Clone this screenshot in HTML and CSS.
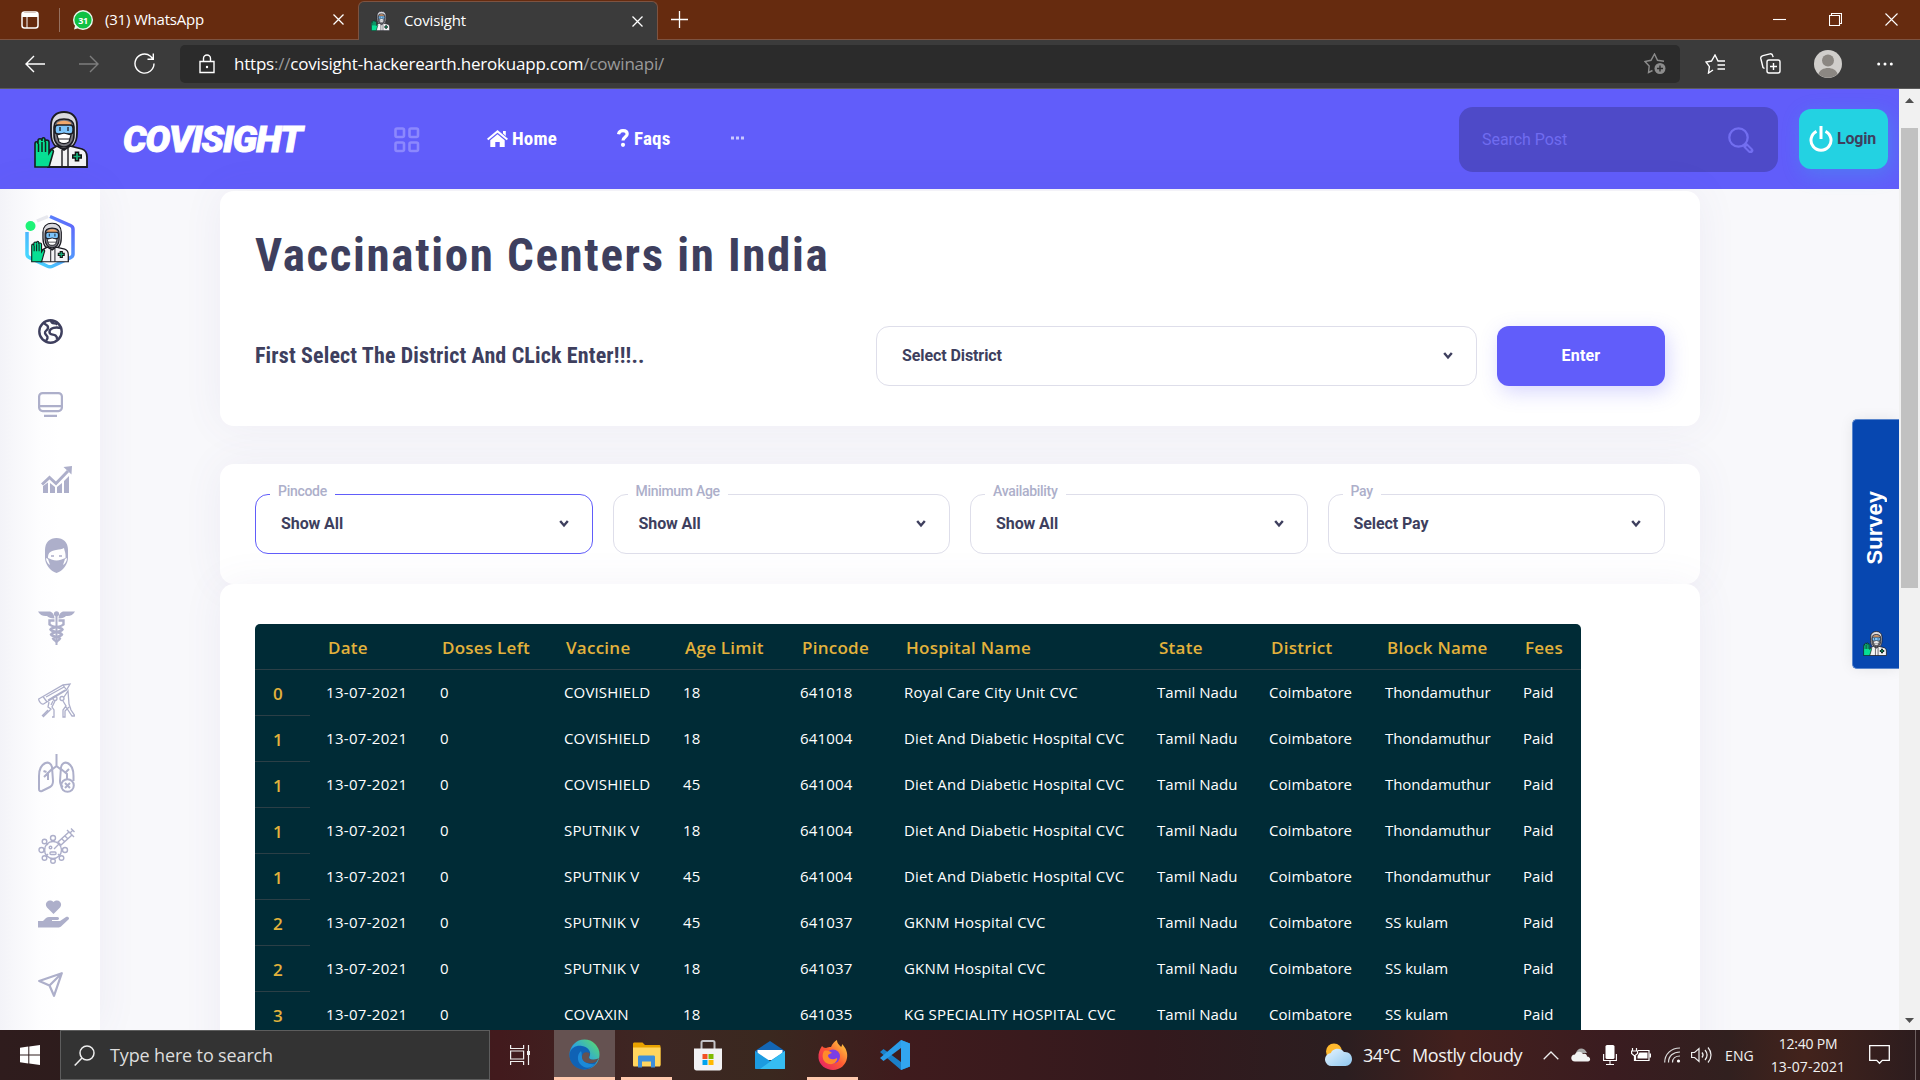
FILE: index.html
```html
<!DOCTYPE html>
<html lang="en">
<head>
<meta charset="utf-8">
<title>Covisight</title>
<link rel="stylesheet" href="styles.css">
</head>
<body>
<svg class="defs" aria-hidden="true">
  <defs>
    <symbol id="doctor" viewBox="0 0 54 57">
      <path d="M30 1c-8 0-13 5-13 13v8c0 9 4 16 13 16s13-7 13-16v-8C43 6 38 1 30 1z" fill="#d9d9de" stroke="#1b1b22" stroke-width="1.8"/>
      <path d="M20 16c0-6 4-8 10-8s10 2 10 8v8c0 7-4 12-10 12s-10-5-10-12z" fill="#77777f" stroke="#1b1b22" stroke-width="1.6"/>
      <path d="M23 12c4-3 10-3 14 0v3H23z" fill="#f0a86c"/>
      <rect x="21" y="14" width="18" height="9" rx="3" fill="#7cc4fb" stroke="#1b1b22" stroke-width="1.5"/>
      <path d="M26 16v4M34 16v4" stroke="#1b1b22" stroke-width="1.3"/>
      <path d="M23 24l7-2 7 2-2 7c-3 2-7 2-10 0z" fill="#fff" stroke="#1b1b22" stroke-width="1.2"/>
      <path d="M24 28h12" stroke="#1b1b22"/>
      <path d="M14 56V40l9-5 7 4 6-4 12 3c3 1 5 4 5 8v10z" fill="#f3f3f5" stroke="#1b1b22" stroke-width="1.8"/>
      <path d="M28 39v17M34 37v19" stroke="#1b1b22" stroke-width="1.4"/>
      <path d="M43 40.500v10M38 45.500h10" stroke="#111" stroke-width="4.600"/>
      <path d="M43 42v7M39.500 45.500h7" stroke="#17b07a" stroke-width="1.700"/>
      <path d="M1 56V33c0-3 3-3 3 0v-3c0-3 4-3 4 0v-1c0-3 3-3 3 0v2c0-3 4-2 4 0v11l2-3c2-1 3 1 2 3l-4 14z" fill="#07df94" stroke="#14201d" stroke-width="1.6"/>
      <path d="M4.500 33v8M8 31v10M11.500 31v10" stroke="#14201d" stroke-width="1.5"/>
    </symbol>
    <linearGradient id="hexline" x1="1" y1="0" x2="0" y2="1"><stop offset="0" stop-color="#615dfa"/><stop offset="1" stop-color="#41e5ff"/></linearGradient>
    <linearGradient id="edgeA" x1="0" y1="1" x2="1" y2="0"><stop offset="0" stop-color="#0c59a4"/><stop offset=".45" stop-color="#2aa3e0"/><stop offset="1" stop-color="#61e261"/></linearGradient>
    <linearGradient id="fox" x1="0" y1="1" x2="1" y2="0"><stop offset="0" stop-color="#e0186f"/><stop offset=".5" stop-color="#ff5a33"/><stop offset="1" stop-color="#ffe240"/></linearGradient>
    <linearGradient id="cloud" x1="0" y1="0" x2="1" y2="1"><stop offset="0" stop-color="#e6f4ff"/><stop offset="1" stop-color="#8ec7ef"/></linearGradient>
  </defs>
</svg>

<div class="tabstrip">
  <svg class="tab-actions" width="18" height="18" viewBox="0 0 18 18"><rect x="1" y="1" width="16" height="16" rx="2.500" fill="none" stroke="#fff" stroke-width="1.500"/><path d="M1 2h16v4H1z" fill="#fff"/><path d="M6 6v11" stroke="#fff"/></svg>
  <div class="tab tab-idle">
    <svg width="20" height="20" viewBox="0 0 20 20"><circle cx="10" cy="10" r="9.300" fill="#0fc143" stroke="#e9f6ec" stroke-width="1.400"/><path d="M1 19.500l1.400-5 3.500 3.400z" fill="#e9f6ec"/><text x="10" y="13.600" text-anchor="middle" class="badge">31</text></svg>
    <span>(31) WhatsApp</span>
    <svg class="x" width="11" height="11" viewBox="0 0 11 11"><path d="M.5.500l10 10M10.500.500l-10 10"/></svg>
  </div>
  <div class="tab tab-active">
    <svg width="19" height="20"><use href="#doctor"/></svg>
    <span>Covisight</span>
    <svg class="x" width="11" height="11" viewBox="0 0 11 11"><path d="M.5.500l10 10M10.500.500l-10 10"/></svg>
  </div>
  <svg class="plus" width="17" height="17" viewBox="0 0 17 17"><path d="M8.500 0v17M0 8.500h17" stroke="#fff" stroke-width="1.300"/></svg>
  <div class="win">
    <svg width="13" height="13" viewBox="0 0 13 13"><path d="M0 6.500h13"/></svg>
    <svg width="13" height="13" viewBox="0 0 13 13"><path d="M.5 2.500h10v10H.5zM2.500 2.500v-2h10v10h-2"/></svg>
    <svg width="13" height="13" viewBox="0 0 13 13"><path d="M.5.500l12 12M12.500.500l-12 12"/></svg>
  </div>
</div>

<div class="toolbar">
  <svg width="20" height="18" viewBox="0 0 20 18"><path d="M20 9H1M9 1L1 9l8 8"/></svg>
  <svg class="dim" width="20" height="18" viewBox="0 0 20 18"><path d="M0 9h19M11 1l8 8-8 8"/></svg>
  <svg width="21" height="21" viewBox="0 0 21 21"><path d="M20 10.500a9.500 9.500 0 1 1-3.500-7.300L19 6M19.300.500V6.200H13.500"/></svg>
  <div class="url">
    <svg width="16" height="20" viewBox="0 0 16 20"><path d="M1 7.500h14v11H1zM4.500 7.500V4.500a3.500 3.500 0 0 1 7 0v3" /><circle cx="8" cy="13" r="1.200" fill="#fff" stroke="none"/></svg>
    <p>https<i>://</i>covisight-hackerearth.herokuapp.com<i>/cowinapi/</i></p>
    <svg class="favadd" width="22" height="22" viewBox="0 0 22 22"><path d="M8.500 17.500l-4 2 .7-6.500L1 8.500l6-1.200L10.500 1l3 6.300 6.500 1"/><circle cx="16" cy="15.500" r="5.500" fill="#8c8c8c" stroke="none"/><path d="M16 12.500v6M13 15.500h6" stroke="#2b2b2b"/></svg>
  </div>
  <svg class="t1" width="21" height="20" viewBox="0 0 21 20"><path d="M8 16l-4.500 3 .9-6.300L1 8l5.500-1L10 1l3 6h7M12.500 11H20M12.500 15H20"/></svg>
  <svg class="t2" width="21" height="21" viewBox="0 0 21 21"><rect x="7" y="7" width="13" height="13" rx="2"/><path d="M13.500 10v7M10 13.500h7M4.500 15.500L3 14.500l-2.200-9C.5 4 1.500 3 3 2.600L10 .9c1.500-.3 2.500.6 2.800 2l.3 1.200"/></svg>
  <svg class="t3" width="28" height="28" viewBox="0 0 28 28"><circle cx="14" cy="14" r="14" fill="#d0cecb" stroke="none"/><circle cx="14" cy="10.500" r="6" fill="#8b8782" stroke="none"/><path d="M4.500 24c2-8 17-8 19 0-5 5-14 5-19 0z" fill="#8b8782" stroke="none"/></svg>
  <svg class="t4" width="16" height="4" viewBox="0 0 16 4"><g fill="#fff" stroke="none"><circle cx="1.700" cy="2" r="1.500"/><circle cx="8" cy="2" r="1.500"/><circle cx="14.300" cy="2" r="1.500"/></g></svg>
</div>

<div class="page">
  <div class="site">
    <header class="header">
      <svg class="logo" width="54" height="57"><use href="#doctor"/></svg>
      <div class="brand">COVISIGHT</div>
      <svg class="grid-ico" width="26" height="26" viewBox="0 0 26 26"><g fill="none" stroke="#8c88fd" stroke-width="2.600"><rect x="1.500" y="1.500" width="8.500" height="8.500" rx="1.500"/><rect x="15.500" y="1.500" width="8.500" height="8.500" rx="1.500"/><rect x="1.500" y="15.500" width="8.500" height="8.500" rx="1.500"/><rect x="15.500" y="15.500" width="8.500" height="8.500" rx="1.500"/></g></svg>
      <nav class="nav">
        <a class="home"><svg width="21" height="17" viewBox="0 0 21 17"><path d="M10.500 0L21 8.800l-1.300 1.500L10.500 2.700 1.300 10.300 0 8.800zM16 1h2.800v5L16 3.600z" fill="#fff"/><path d="M10.500 4.200l7.200 6V17h-5v-5H8.300v5h-5v-6.800z" fill="#fff"/></svg>Home</a>
        <a class="faqs"><svg width="12" height="18" viewBox="0 0 12 18"><path d="M1.500 5.300C2 2.800 3.600 1.700 6 1.700c2.400 0 4.200 1.300 4.200 3.400 0 3-4 3-4.200 6.400" fill="none" stroke="#fff" stroke-width="3.200"/><circle cx="6" cy="15.800" r="2.100" fill="#fff"/></svg>Faqs</a>
        <svg class="more" width="13" height="4" viewBox="0 0 13 4"><path d="M0 .500h3v3H0zM5 .500h3v3H5zM10 .500h3v3h-3z" fill="#c9c8ff"/></svg>
      </nav>
      <div class="search"><span>Search Post</span><svg width="26" height="26" viewBox="0 0 26 26"><g fill="none" stroke="#726ef0" stroke-width="2.300"><circle cx="10.500" cy="10.500" r="9.200"/><path d="M18 19l4.500 4.500" stroke-width="5.500" stroke-linecap="round"/><path d="M18.500 19.500l4 4" stroke="#4e4ac8" stroke-width="1.600" /></g></svg></div>
      <div class="login"><svg width="24" height="26" viewBox="0 0 24 26"><path d="M7.500 5.300a10 10 0 1 0 9 0M12 0v13" fill="none" stroke="#fff" stroke-width="3"/></svg>Login</div>
    </header>

    <div class="body">
      <aside class="side">
        <svg class="avatar" width="52" height="56" viewBox="0 0 52 56"><path d="M13 7l11-4.500" stroke="#e7e8ee" stroke-width="3.500" fill="none"/><path d="M26 2.500l20.500 9c1.500.7 2.500 2 2.500 3.500v25c0 1.500-1 3-2.500 3.700L29 52c-2 1-4 1-6 0L5.500 43.700C4 43 3 41.500 3 40V18" fill="none" stroke="url(#hexline)" stroke-width="3.500"/><svg x="7" y="8" width="38" height="41" viewBox="0 0 54 57"><use href="#doctor"/></svg><circle cx="6.500" cy="12" r="5" fill="#1df377"/></svg>
        <svg class="s1" width="25" height="25" viewBox="0 0 25 25" fill="none" stroke="#3e3f5e" stroke-width="2.400"><circle cx="12.500" cy="12.500" r="11.200"/><path d="M5.500 4c2 2 5 2 4.500 5s-3.500 2.500-3 5 3 2.500 2.500 5-2 2.500-2 4M13 1.500c.5 4 4 2 6.500 4M23 9c-5-1-11-.5-11.500 3.500s4 2.500 6 4 1.500 2.500 1.500 4"/></svg>
        <svg class="s2" width="25" height="25" viewBox="0 0 25 25" fill="none" stroke="#adafca" stroke-width="2.200"><rect x="1.100" y="1.100" width="22.800" height="18" rx="3.500"/><path d="M1 14.200h23M6 23.800h13"/></svg>
        <svg class="s3" width="31" height="28" viewBox="0 0 31 28" fill="#adafca"><path d="M2 20l5-3.500V27H2zM9 17l5 4v6H9zM16 21l5-4v10h-5zM23 15l5-5v17h-5z"/><path d="M1 18.500l7.500-7 6.500 6L27 5" fill="none" stroke="#adafca" stroke-width="3"/><path d="M22.500 1l8.500-1-.5 8.500z"/></svg>
        <svg class="s4" width="23" height="35" viewBox="0 0 23 35" fill="#adafca"><path d="M0 12C0 4 5 0 11.500 0S23 4 23 12v8c0 6-5 13-11.500 15C5 33 0 26 0 20z"/><path d="M3 20c0-5 2-7 8-8 4-.6 6-1 8-2 .5 3 2 5 1.500 10l-4 1.500c-3.500 1.300-6.500 1.300-10 0z" fill="#fff"/><path d="M1 20l2 1 2 6c-2-1-4-4-4-7zM22 20l-2 1-2 6c2-1 4-4 4-7z" fill="#fff"/><path d="M6 18h3M14 18h3" stroke="#adafca" stroke-width="1.500"/></svg>
        <svg class="s5" width="37" height="34" viewBox="0 0 37 34" fill="#adafca"><circle cx="18.500" cy="2.800" r="2.600"/><path d="M17.500 4h2v30h-2zM0 .5h11c3 0 5 2 5.500 7-4 0-6-1-7.500-2.500C5 5.500 2 4 0 .5zM37 .5H26c-3 0-5 2-5.500 7 4 0 6-1 7.500-2.500C32 5.500 35 4 37 .5z"/><path d="M16.500 9.500h-5v4c3 3 11 2 13 5-2 3-10 2-11.500 5 2 3 8 2 9 4-1 2-3 2-4 4M20.500 9.500h5v4c-3 3-11 2-13 5 2 3 10 2 11.500 5-2 3-8 2-9 4 1 2 3 2 4 4" fill="none" stroke="#adafca" stroke-width="2.400"/></svg>
        <svg class="s6" width="37" height="35" viewBox="0 0 37 35" fill="none" stroke="#adafca" stroke-width="1.300"><path d="M.7 16L25 2l7-1-3.500 6-23 14c-2 1-5-3-4.800-5zM5 13.500l4 5.500M25 2l3.500 5M8 14l18-10M10 17l17-10"/><circle cx="17" cy="15.500" r="2"/><circle cx="24" cy="15.500" r="2"/><path d="M15 18l-2 4M11 19l-1 5 3 2-8 8M17 18l-3 6 2 3v7h-2M10 27l-6 6M26 14l4-6 1 13 2 6 4 6h-3l-6-9M25 18l3 5-3 4v7h2v-6l4-4"/></svg>
        <svg class="s7" width="37" height="39" viewBox="0 0 37 39" fill="none" stroke="#adafca" stroke-width="2"><path d="M18.500 0v12l-5 4M18.500 12l5 4M14 13c-1-4-4-5-6.500-4C3 11 1 16 1 22v13c0 2 1 2.500 3 2l8-4c2-1 3-3 3-6zM23 13c1-4 4-5 6.500-4 4.500 2 6 7 6 13v5M23 13l-1 14c0 3 1 5 3 6M14 15l-8 8M10 18v8M5.500 17l3 1M23 15l6 5v5M31 15l-3 3"/><circle cx="29.500" cy="31.500" r="6.300"/><path d="M27 29l5 5M32 29l-5 5"/></svg>
        <svg class="s8" width="37" height="36" viewBox="0 0 37 36" fill="none" stroke="#adafca" stroke-width="1.400"><circle cx="15" cy="22" r="8.500"/><g><circle cx="15" cy="10" r="2.500"/><circle cx="15" cy="33" r="2.300"/><circle cx="3.500" cy="22" r="2.500"/><circle cx="27" cy="22" r="2.500"/><circle cx="6.500" cy="13.500" r="2.300"/><circle cx="6.500" cy="30" r="2.300"/><circle cx="23.500" cy="30" r="2.300"/><path d="M13 13h4M13 31h4M6.500 20v4M24 20v4M8 15l2 2M8 28l2-2M22 28l-2-2"/></g><circle cx="12.500" cy="19.500" r="1.300"/><rect x="12" y="24" width="6" height="2.500" rx="1"/><path d="M16 21l6-6M20 14L31 4l3 3-11 10zM29 2l7 7M32 5l3-3M33 .5l3.500 3.500M24 11l3 3M27 8l3 3"/></svg>
        <svg class="s9" width="31" height="28" viewBox="0 0 31 28" fill="#adafca"><path d="M15.500 14L9 7.500C5.500 3 11-2 15.500 2c4.500-4 10 1 6.500 5.500zM0 21h5l3-3c1-.7 2-1 3-1h8.500c2 0 2 3 0 3H14v1h8l6-4c2-1 4 1 2.500 2.500L23 26.500c-1 .8-2 1-3 1H0z"/></svg>
        <svg class="s10" width="25" height="25" viewBox="0 0 25 25" fill="none" stroke="#adafca" stroke-width="2.200" stroke-linejoin="round"><path d="M23.800 1.200L1.200 9l10.300 4.500L16 23.800zM23.800 1.200L11.500 13.500"/></svg>
      </aside>

      <main class="main">
        <section class="card intro">
          <h1>Vaccination Centers in India</h1>
          <div class="pick">
            <h2>First Select The District And CLick Enter!!!..</h2>
            <div class="select wide"><span>Select District</span><svg class="chev" width="10" height="9" viewBox="0 0 10 9"><path d="M1.200 2L5 6.500 8.800 2"/></svg></div>
            <button class="enter">Enter</button>
          </div>
        </section>
        <section class="card filters">
          <div class="select on"><label>Pincode</label><span>Show All</span><svg class="chev" width="10" height="9" viewBox="0 0 10 9"><path d="M1.200 2L5 6.500 8.800 2"/></svg></div>
          <div class="select"><label>Minimum Age</label><span>Show All</span><svg class="chev" width="10" height="9" viewBox="0 0 10 9"><path d="M1.200 2L5 6.500 8.800 2"/></svg></div>
          <div class="select"><label>Availability</label><span>Show All</span><svg class="chev" width="10" height="9" viewBox="0 0 10 9"><path d="M1.200 2L5 6.500 8.800 2"/></svg></div>
          <div class="select"><label>Pay</label><span>Select Pay</span><svg class="chev" width="10" height="9" viewBox="0 0 10 9"><path d="M1.200 2L5 6.500 8.800 2"/></svg></div>
        </section>
        <section class="card data">
          <table>
            <colgroup><col class="c0"><col class="c1"><col class="c2"><col class="c3"><col class="c4"><col class="c5"><col class="c6"><col class="c7"><col class="c8"><col class="c9"><col class="c10"></colgroup>
            <thead><tr><th></th><th>Date</th><th>Doses Left</th><th>Vaccine</th><th>Age Limit</th><th>Pincode</th><th>Hospital Name</th><th>State</th><th>District</th><th>Block Name</th><th>Fees</th></tr></thead>
            <tbody>
              <tr><th>0</th><td>13-07-2021</td><td>0</td><td>COVISHIELD</td><td>18</td><td>641018</td><td>Royal Care City Unit CVC</td><td>Tamil Nadu</td><td>Coimbatore</td><td>Thondamuthur</td><td>Paid</td></tr>
              <tr><th>1</th><td>13-07-2021</td><td>0</td><td>COVISHIELD</td><td>18</td><td>641004</td><td>Diet And Diabetic Hospital CVC</td><td>Tamil Nadu</td><td>Coimbatore</td><td>Thondamuthur</td><td>Paid</td></tr>
              <tr><th>1</th><td>13-07-2021</td><td>0</td><td>COVISHIELD</td><td>45</td><td>641004</td><td>Diet And Diabetic Hospital CVC</td><td>Tamil Nadu</td><td>Coimbatore</td><td>Thondamuthur</td><td>Paid</td></tr>
              <tr><th>1</th><td>13-07-2021</td><td>0</td><td>SPUTNIK V</td><td>18</td><td>641004</td><td>Diet And Diabetic Hospital CVC</td><td>Tamil Nadu</td><td>Coimbatore</td><td>Thondamuthur</td><td>Paid</td></tr>
              <tr><th>1</th><td>13-07-2021</td><td>0</td><td>SPUTNIK V</td><td>45</td><td>641004</td><td>Diet And Diabetic Hospital CVC</td><td>Tamil Nadu</td><td>Coimbatore</td><td>Thondamuthur</td><td>Paid</td></tr>
              <tr><th>2</th><td>13-07-2021</td><td>0</td><td>SPUTNIK V</td><td>45</td><td>641037</td><td>GKNM Hospital CVC</td><td>Tamil Nadu</td><td>Coimbatore</td><td>SS kulam</td><td>Paid</td></tr>
              <tr><th>2</th><td>13-07-2021</td><td>0</td><td>SPUTNIK V</td><td>18</td><td>641037</td><td>GKNM Hospital CVC</td><td>Tamil Nadu</td><td>Coimbatore</td><td>SS kulam</td><td>Paid</td></tr>
              <tr><th>3</th><td>13-07-2021</td><td>0</td><td>COVAXIN</td><td>18</td><td>641035</td><td>KG SPECIALITY HOSPITAL CVC</td><td>Tamil Nadu</td><td>Coimbatore</td><td>SS kulam</td><td>Paid</td></tr>
            </tbody>
          </table>
        </section>
      </main>
    </div>
    <div class="survey"><span>Survey</span><svg width="24" height="25"><use href="#doctor"/></svg></div>
  </div>
  <div class="scroll">
    <svg width="9" height="5" viewBox="0 0 9 5"><path d="M0 5l4.500-5L9 5z" fill="#505050"/></svg>
    <div class="thumb"></div>
    <svg class="down" width="9" height="5" viewBox="0 0 9 5"><path d="M0 0l4.500 5L9 0z" fill="#505050"/></svg>
  </div>
</div>

<div class="taskbar">
  <div class="start"><svg width="20" height="20" viewBox="0 0 20 20"><path d="M0 2.800l8.300-1.200v8H0zM9.300 1.400L20 0v9.600H9.300zM0 10.500h8.300v8L0 17.300zM9.300 10.500H20V20L9.300 18.600z" fill="#fff"/></svg></div>
  <div class="find"><svg width="21" height="21" viewBox="0 0 21 21"><circle cx="13" cy="8" r="7" fill="none" stroke="#eee" stroke-width="1.500"/><path d="M8 13l-7.300 7.500" stroke="#eee" stroke-width="1.500"/></svg><span>Type here to search</span></div>
  <svg class="tview" width="21" height="20" viewBox="0 0 21 20" fill="none" stroke="#eee" stroke-width="1.200"><path d="M.6 0v3.500h13V0M.6 6h13v8H.6zM.6 20v-3.500h13V20M18.500 0v20"/><path d="M17 6h3v4h-3z" fill="#eee" stroke="none"/></svg>
  <div class="app edge"><svg width="31" height="31" viewBox="0 0 31 31"><circle cx="15.500" cy="15.500" r="15" fill="url(#edgeA)"/><path d="M.5 15C2 8 8 6 13 7c6 1 9 5 8 9-.5 2-1.500 3 0 4 2 1.500 5 1 8 0-2 6-8 10.500-13.500 10.500C7 30.500 0 24 .5 15z" fill="#0f62b5"/><path d="M12 12c-5 4-4 13 3 16 4 1.700 8 0 11-3-6 1-12-2-13-7-.4-2.500 0-4-1-6z" fill="#1b8ad8"/><path d="M13 18c0 5 6 8 14 5l3-4c-4 2-9 2-10 0-.8-1.500 1-2 .5-5-4-2-7.500 0-7.500 4z" fill="#655251"/></svg></div>
  <div class="app folder"><svg width="29" height="26" viewBox="0 0 29 26"><path d="M1 2c0-1 .5-1.500 1.500-1.500h8L13 3h14c1 0 1.500.5 1.500 1.500V23H1z" fill="#e8a200"/><path d="M1 5.500h27.500V23c0 1-.5 1.500-1.500 1.500H2.500C1.500 24.500 1 24 1 23z" fill="#ffd65f"/><path d="M6 25.500V15c0-1 .5-1.500 1.500-1.500h14c1 0 1.500.5 1.500 1.500v10.500h-4v-6h-9v6z" fill="#3d8fdb"/></svg></div>
  <div class="app"><svg width="30" height="31" viewBox="0 0 30 31"><path d="M8.500 9V2.500c0-1 .5-1.500 1.500-1.500h10c1 0 1.500.5 1.500 1.500V9" fill="none" stroke="#c4c4c8" stroke-width="2"/><path d="M1 8.500h28V28c0 1.500-1 2.500-2.500 2.500h-23C2 30.500 1 29.500 1 28z" fill="#f2f2f4"/><path d="M9.500 14h5v5h-5z" fill="#f25022"/><path d="M15.500 14h5v5h-5z" fill="#7fba00"/><path d="M9.500 20h5v5h-5z" fill="#00a4ef"/><path d="M15.500 20h5v5h-5z" fill="#ffb900"/></svg></div>
  <div class="app"><svg width="30" height="28" viewBox="0 0 30 28"><path d="M0 10L15 0l15 10v4H0z" fill="#1366b5"/><path d="M2.500 9h25v10h-25z" fill="#fff"/><path d="M0 10l15 10 15-10v17c0 .6-.4 1-1 1H1c-.6 0-1-.4-1-1z" fill="#1c9be0"/><path d="M30 10v17c0 .6-.4 1-1 1H5z" fill="#36bdf2"/></svg></div>
  <div class="app fire"><svg width="30" height="30" viewBox="0 0 30 30"><path d="M4 6c1 1 2 2 4 2 2-1 3-1 5-1 1-3 4-6 6-7 0 4 3 5 4 7 1-1 1-2 1-3 4 4 6 9 5 14-1 7-7 12-14 12S1 25 .5 18C0 13 2 9 4 6z" fill="url(#fox)"/><circle cx="15" cy="16.500" r="7" fill="#7a3ee6"/><path d="M6 11c3-1 6 0 8 2-2 1-4 1-4 3 1 4 6 4 9 2 1 3-3 7-8 6-6-1-8-8-5-13z" fill="#ff8a2b"/></svg></div>
  <div class="app"><svg width="31" height="30" viewBox="0 0 31 30"><path d="M22 0l9 3.500v23L22 30 1 12l3.500-3L22 22z" fill="#1b7fc8"/><path d="M22 0v8L4.500 21 1 18z" fill="#2b9ce8"/><path d="M22 0l9 3.500v23L22 30z" fill="#32a5ef"/></svg></div>
  <div class="tray">
    <svg class="w" width="27" height="24" viewBox="0 0 27 24"><circle cx="9" cy="8.500" r="8" fill="#ffb92e"/><path d="M7 23a6.500 6.500 0 0 1-1-13c1-4 9-6.500 13-1 5-.5 8 3 8 7s-3 7-6.500 7z" fill="url(#cloud)"/></svg>
    <span class="temp">34°C</span><span class="sky">Mostly cloudy</span>
    <svg class="up" width="16" height="9" viewBox="0 0 16 9"><path d="M.7 8.300L8 1l7.300 7.300" fill="none" stroke="#eee" stroke-width="1.300"/></svg>
    <svg class="od" width="20" height="14" viewBox="0 0 20 14"><path d="M5 5c1-5 8-7 11 0z" fill="#aaa"/><path d="M4 13.500c-5 0-5-7 0-7 1-3 6-4 8-.5 3-1 4 1 4 2.500 4 0 4 5 1 5z" fill="#f2f2f2"/></svg>
    <svg class="mic" width="14" height="20" viewBox="0 0 14 20"><rect x="2.500" width="9" height="14" rx="1.500" fill="#fff"/><path d="M.6 9v6.500h12.800V9M7 15.500v4M3 19.500h8" fill="none" stroke="#fff" stroke-width="1.100"/></svg>
    <svg class="bat" width="20" height="14" viewBox="0 0 20 14" fill="none" stroke="#fff" stroke-width="1.200"><path d="M7 2.500h11v10H4.500V8M19.400 5.500v4M1.500 0v3M5.500 0v3M.6 3h6v2.500L3.500 8 .6 5.500zM3.500 8v5"/><path d="M8.500 4.500h8v6h-10V8z" fill="#fff" stroke="none"/></svg>
    <svg class="wifi" width="17" height="16" viewBox="0 0 17 16" fill="none" stroke="#ddd" stroke-width="1.200"><path d="M.7 15.500C.7 7 7 1 16 1M4.500 15.500C4.500 9 9 5 16 5M8.500 15.500c0-4 3-6.500 7.500-6.500"/><circle cx="14.500" cy="14" r="1.600" fill="#fff" stroke="none"/></svg>
    <svg class="vol" width="21" height="18" viewBox="0 0 21 18" fill="none" stroke="#eee" stroke-width="1.200"><path d="M.6 6.500h3L8 2.500v13l-4.400-4h-3zM11 6.500c1.300 1.500 1.300 3.500 0 5M14 4c2.500 3 2.500 7 0 10M17 1.500c4 4.500 4 10.500 0 15"/></svg>
    <span class="eng">ENG</span>
    <div class="clock"><span class="time">12:40 PM</span><span class="date">13-07-2021</span></div>
    <svg class="note" width="21" height="20" viewBox="0 0 21 20"><path d="M.7.700h19.600v14.600h-7l-2.800 3-2.800-3h-7z" fill="none" stroke="#fff" stroke-width="1.300"/></svg>
    <div class="desk"></div>
  </div>
</div>
</body>
</html>
```
FILE: styles.css
```css
* { box-sizing: border-box; }
body { margin: 0; width: 1920px; height: 1080px; overflow: hidden; font-family: "Open Sans", "Noto Sans", sans-serif; display: flex; flex-direction: column; }
svg { display: block; flex: none; }
.defs { position: absolute; width: 0; height: 0; }
h1, h2, p { margin: 0; }

/* browser tab strip */
.tabstrip { height: 40px; flex: none; background: #662b0f; display: flex; align-items: center; padding-left: 21px; color: #fff; font-size: 15px; border-bottom: 1px solid #7d5341; }
.tab { display: flex; align-items: center; }
.tab span { padding-bottom: 2px; }
.tab .x { margin-left: auto; fill: none; stroke: #fff; stroke-width: 1.300; }
.tab-idle { margin-left: 20px; border-left: 1px solid #95705f; height: 24px; width: 299px; padding: 0 14px 0 13px; letter-spacing: -.2px; }
.tab-idle span { margin-left: 12px; }
.tab-active { align-self: flex-end; height: 39px; margin-bottom: -1px; width: 300px; background: #3b3b3b; border: 1px solid #7d5341; border-bottom: 0; border-radius: 6px 6px 0 0; padding: 0 14px 0 12px; letter-spacing: -.15px; }
.tab-active span { margin-left: 14px; }
.badge { font: 700 9px "Open Sans", sans-serif; fill: #fff; letter-spacing: -.3px; }
.plus { margin-left: 13px; }
.win { margin-left: auto; display: flex; gap: 43px; padding-right: 22px; fill: none; stroke: #fff; stroke-width: 1.100; }

/* address bar */
.toolbar { height: 49px; flex: none; background: #3b3b3b; border-bottom: 1px solid #5c5c5c; display: flex; align-items: center; padding: 0 0 1px 25px; fill: none; stroke: #fff; stroke-width: 1.400; }
.toolbar .dim { stroke: #7d7d7d; margin: 0 35px 0 34px; }
.url { width: 1500px; height: 38px; margin-left: 25px; background: #2b2b2b; border-radius: 5px; display: flex; align-items: center; padding: 0 14px 0 19px; }
.url p { margin-left: 19px; padding-bottom: 1px; font-size: 17px; letter-spacing: -.21px; color: #fff; }
.url i { font-style: normal; color: #9a9a9a; }
.favadd { margin-left: auto; stroke: #8c8c8c; }
.t1 { margin-left: 25px; }
.t2 { margin-left: 34px; }
.t3 { margin-left: 33px; }
.t4 { margin-left: 35px; }

.page { height: 941px; flex: none; display: flex; }
.site { width: 1899px; overflow: hidden; position: relative; background: #f8f8fb; }

/* site header */
.header { height: 100px; background: #615dfa; display: flex; align-items: center; padding-left: 34px; color: #fff; font-family: Roboto, sans-serif; }
.brand { margin-left: 35px; width: 271px; font: italic 900 37px/50px Roboto, sans-serif; letter-spacing: -1px; -webkit-text-stroke: 1px #fff; padding-top: 2px; }
.grid-ico { margin-top: 2px; }
.nav { display: flex; align-items: center; font-size: 19px; font-weight: 700; font-stretch: 85%; letter-spacing: .2px; width: 1039px; padding: 0 0 2px 67px; }
.nav a { display: flex; align-items: center; gap: 4px; }
.home { width: 130px; }
.faqs { width: 114px; }
.faqs svg { margin-right: 1px; }
.search { width: 319px; height: 65px; border-radius: 14px; background: #4e4ac8; display: flex; justify-content: space-between; align-items: center; padding: 0 24px 0 23px; color: #706cf0; font-size: 16px; font-weight: 400; letter-spacing: -.05px; margin: 1px 0 0; }
.login { margin-left: 21px; width: 89px; height: 60px; border-radius: 12px; background: #23d2e2; box-shadow: 3px 5px 20px rgba(35, 210, 226, .25); color: #3e3f5e; font-size: 16px; font-weight: 700; letter-spacing: -.2px; display: flex; align-items: center; justify-content: center; gap: 4px; padding: 0 2px 1px 0; }

/* sidebar */
.body { display: flex; height: 841px; }
.side { width: 100px; background: linear-gradient(90deg, #f3f3f8 0, #f8f8fb 18px, #fdfdfe 38px, #fff 60px); box-shadow: 0 0 40px rgba(94, 92, 154, .07); display: flex; flex-direction: column; align-items: flex-start; padding: 25px 0 0 38px; }
.avatar { margin-left: -14px; }
.s1 { margin-top: 49px; }
.s2 { margin-top: 48px; }
.s3 { margin: 49px 0 0 3px; }
.s4 { margin: 44px 0 0 7px; }
.s5 { margin-top: 38px; }
.s6 { margin-top: 38px; }
.s7 { margin-top: 36px; }
.s8 { margin-top: 35px; }
.s9 { margin-top: 36px; }
.s10 { margin-top: 44px; }

/* content cards */
.main { width: 1480px; margin: 2px 0 0 120px; font-family: Roboto, sans-serif; color: #3e3f5e; }
.card { background: #fff; border-radius: 14px; box-shadow: 0 0 40px rgba(94, 92, 154, .07); padding: 0 35px; }
.intro { height: 235px; padding-top: 34px; }
h1 { font-size: 47px; line-height: 60px; font-weight: 700; font-stretch: 85%; letter-spacing: 1.650px; }
.pick { margin-top: 41px; display: flex; align-items: center; }
h2 { width: 621px; font-size: 22px; font-weight: 700; font-stretch: 85%; letter-spacing: .15px; line-height: 30px; padding-bottom: 1px; }
.select { position: relative; flex: 1; height: 60px; border: 1px solid #dedeea; border-radius: 13px; display: flex; align-items: center; justify-content: space-between; padding: 0 23px 2px 25px; font-size: 16px; font-weight: 700; letter-spacing: -.09px; }
.select.on { border-color: #615dfa; }
.select.wide { flex: none; width: 601px; }
.select label { position: absolute; left: 14px; top: -14px; line-height: 20px; padding: 0 8px; background: #fff; color: #adafca; font-size: 14px; font-weight: 500; letter-spacing: -.3px; }
.chev { fill: none; stroke: #3e3f5e; stroke-width: 2.400; }
.enter { margin-left: 20px; width: 168px; height: 60px; padding: 0 0 2px; border: 0; border-radius: 12px; background: #615dfa; color: #fff; font: 700 16px Roboto, sans-serif; letter-spacing: .2px; box-shadow: 3px 6px 20px rgba(97, 93, 250, .25); }
.filters { margin-top: 38px; height: 120px; padding-top: 30px; display: flex; gap: 20px; }
.data { height: 600px; padding-top: 40px; }

/* centres table */
table { width: 1326px; table-layout: fixed; border-collapse: separate; border-spacing: 0; background: #002b36; border-radius: 5px 5px 0 0; font-family: "Open Sans", "Noto Sans", sans-serif; color: #fff; white-space: nowrap; }
th, td { height: 46px; padding: 0 0 2px 16px; text-align: left; font-size: 15px; font-weight: 400; line-height: 20px; letter-spacing: .15px; }
th { color: #e3b23c; font-size: 17px; font-weight: 600; padding: 2px 0 0 18px; border-bottom: 1px solid #2b3f46; letter-spacing: .25px; }
td:nth-child(2) { letter-spacing: .3px; }
td:nth-child(7) { letter-spacing: .2px; }
td:nth-child(8), td:nth-child(9), td:nth-child(11) { letter-spacing: .05px; }
td:nth-child(10) { letter-spacing: -.05px; }
.c0 { width: 55px; } .c1 { width: 114px; } .c2 { width: 124px; } .c3 { width: 119px; } .c4 { width: 117px; } .c5 { width: 104px; } .c6 { width: 253px; } .c7 { width: 112px; } .c8 { width: 116px; } .c9 { width: 138px; } .c10 { width: 74px; }

.survey { position: absolute; right: 0; top: 330px; width: 47px; height: 250px; background: #0747b0; border: 1px solid #5a86cc; border-right: 0; border-radius: 5px 0 0 5px; box-shadow: 0 0 14px rgba(0, 0, 0, .08); display: flex; flex-direction: column; align-items: center; justify-content: flex-end; padding: 0 2px 12px 0; }
.survey span { writing-mode: vertical-rl; transform: rotate(180deg); font: 700 22px/24px "Liberation Sans", sans-serif; color: #fff; margin-bottom: 67px; }

.scroll { width: 21px; background: #f1f1f1; display: flex; flex-direction: column; align-items: center; padding: 9px 0 7px; }
.thumb { margin-top: 25px; width: 17px; height: 460px; background: #c1c1c1; }
.down { margin-top: auto; }

/* taskbar */
.taskbar { height: 50px; flex: none; background: linear-gradient(90deg, #2f1c1d 0, #2d1c1c 5%, #421a1d 26%, #3d2723 34%, #3a281f 40%, #3f1b1d 47%, #33191d 60%, #2b1e20 70%, #43201d 76%, #3a1c20 84%, #31201f 90%, #43231c 94%, #2c1c1e 100%); display: flex; align-items: center; color: #f2f2f2; }
.start { width: 60px; display: flex; justify-content: center; }
.find { width: 430px; height: 50px; background: #333; border: 1px solid #5d5d5d; display: flex; align-items: center; padding-left: 13px; gap: 15px; font-size: 18px; letter-spacing: -.14px; color: #ddd; }
.find span { margin-top: -1px; }
.tview { margin: 0 23px 0 20px; }
.app { width: 62px; height: 50px; display: flex; align-items: center; justify-content: center; }
.edge { width: 61px; background: #655251; border-bottom: 3px solid #ffc9ae; }
.edge svg, .folder svg, .fire svg { margin-top: 2px; }
.folder, .fire { width: 51px; margin: 0 5px 0 6px; border-bottom: 3px solid #ffc9ae; }
.tray { margin-left: auto; display: flex; align-items: center; }
.temp { margin-left: 11px; width: 49px; font-size: 18px; letter-spacing: -.6px; }
.sky { width: 112px; font-size: 18px; letter-spacing: -.4px; }
.up { margin-left: 19px; }
.od { margin-left: 12px; }
.mic { margin-left: 12px; }
.bat { margin-left: 14px; }
.wifi { margin-left: 13px; }
.vol { margin-left: 10px; }
.eng { margin-left: 13px; width: 29px; font-size: 14px; letter-spacing: .1px; }
.clock { margin-left: 16px; width: 76px; display: flex; flex-direction: column; align-items: center; font-size: 14px; line-height: 23px; }
.time { letter-spacing: -.2px; }
.date { letter-spacing: .15px; }
.note { margin-left: 23px; }
.desk { margin-left: 25px; width: 5px; height: 50px; border-left: 1px solid #6d6060; }
```
